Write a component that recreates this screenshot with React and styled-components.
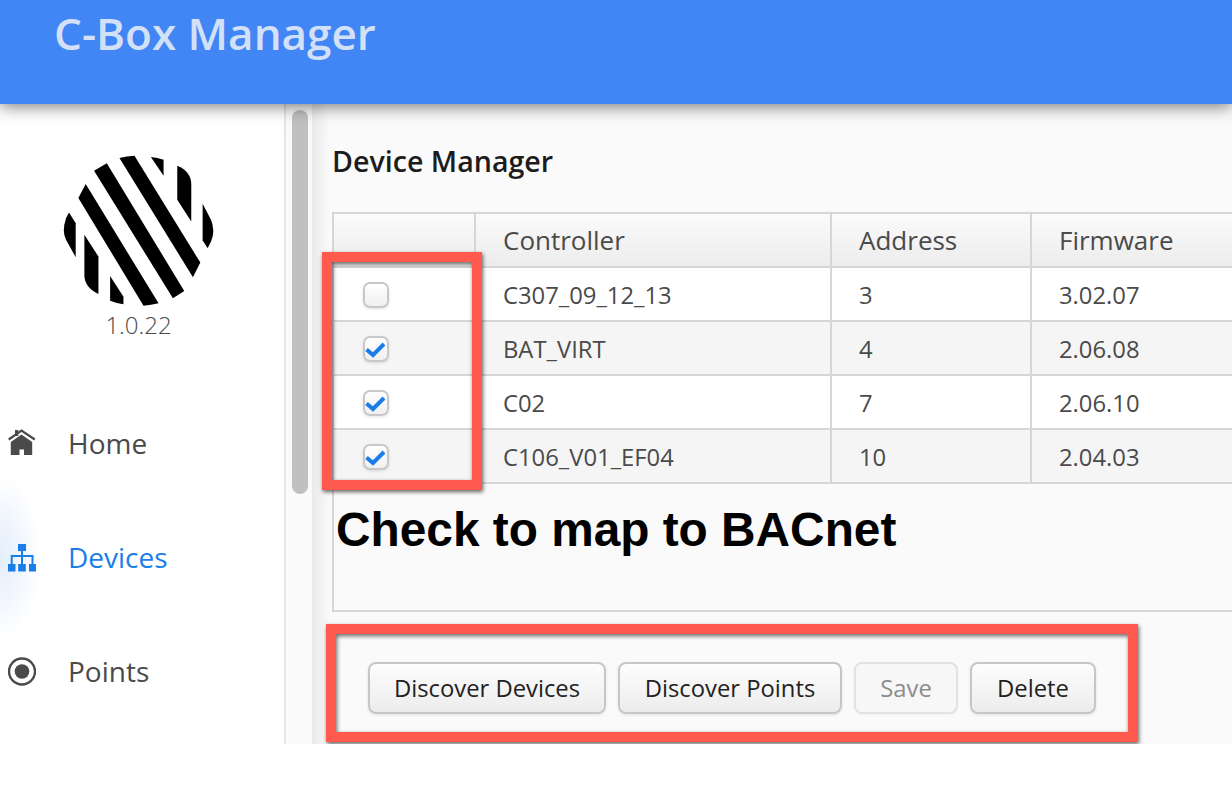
import React from "react";
import styled, { createGlobalStyle } from "styled-components";

const Global = createGlobalStyle`
  html, body { margin: 0; padding: 0; background: #fff; overflow: hidden; }
  body { font-family: "Open Sans", "Noto Sans", sans-serif; }
  * { box-sizing: border-box; }
`;

const Shell = styled.div`
  width: 1232px;
  height: 744px;
  display: flex;
  flex-direction: column;
  overflow: hidden;
  position: relative;
`;

const Header = styled.header`
  height: 104px;
  flex: none;
  background: #4285f4;
  padding: 5px 0 0 54px;
  position: relative;
  z-index: 3;
  box-shadow: 0 2px 16px rgba(0, 0, 0, 0.55);
`;

const Brand = styled.h1`
  margin: 0;
  font-size: 44px;
  line-height: 57px;
  font-weight: 600;
  color: #d3e1f8;
`;

const Body = styled.div`
  flex: 1;
  min-height: 0;
  display: flex;
`;

const Sidebar = styled.aside`
  width: 284px;
  flex: none;
  background: #fff;
  padding-top: 49px;
  display: flex;
  flex-direction: column;
  overflow: hidden;
`;

const LogoBlock = styled.div`
  width: 277px;
  height: 233px;
  display: flex;
  flex-direction: column;
  align-items: center;
`;

const Version = styled.div`
  font-size: 24px;
  font-weight: 300;
  line-height: 30px;
  color: #4a4a4a;
`;

const NavItem = styled.div`
  height: 114px;
  flex: none;
  display: flex;
  align-items: center;
  gap: 32px;
  padding-left: 8px;
  font-size: 28px;
  color: ${(p) => (p.$active ? "#1a7ee8" : "#4a4a4a")};
  position: relative;
  & > svg { flex: none; position: relative; z-index: 1; }
  & > span { position: relative; z-index: 1; }
  ${(p) =>
    p.$active &&
    `&::before {
      content: "";
      position: absolute;
      left: -42px;
      top: -25px;
      width: 84px;
      height: 165px;
      border-radius: 50%;
      background: radial-gradient(closest-side, #e4eefc 0, #eff5fd 45%, #ffffff 100%);
    }`}
`;

const ScrollTrack = styled.div`
  width: 28px;
  flex: none;
  background: #fafafa;
  border-left: 2px solid #e6e6e6;
  padding: 6px 4px 0 6px;
`;

const ScrollThumb = styled.div`
  width: 16px;
  height: 384px;
  border-radius: 8px;
  background: #c0c0c0;
`;

const Main = styled.main`
  flex: 1;
  min-width: 0;
  background: linear-gradient(to right, #e9e9e9 0, #fafafa 18px);
  padding: 0 0 0 20px;
  position: relative;
  overflow: hidden;
`;

const Title = styled.h2`
  margin: 0;
  height: 108px;
  padding-top: 38px;
  font-size: 28.6px;
  line-height: 38px;
  font-weight: 600;
  color: #1c1c1c;
`;

const Frame = styled.div`
  width: 1100px;
  height: 400px;
  border: 2px solid #d6d6d6;
  border-right: none;
`;

const Grid = styled.table`
  border-collapse: collapse;
  table-layout: fixed;
  width: 1098px;
  font-size: 23.8px;
  color: #4a4a4a;
`;

const HeadCell = styled.th`
  height: 53px;
  padding: 0 0 0 27px;
  text-align: left;
  font-weight: 400;
  font-size: 26px;
  background: linear-gradient(to bottom, #fbfbfb, #ececec);
  border-right: 2px solid #d6d6d6;
  border-bottom: 2px solid #d6d6d6;
  width: ${(p) => p.$w}px;
`;

const Row = styled.tr`
  background: ${(p) => (p.$odd ? "#f5f5f5" : "#ffffff")};
`;

const Cell = styled.td`
  height: 54px;
  padding: 2px 0 0 27px;
  border-right: 2px solid #d6d6d6;
  border-bottom: 2px solid #d6d6d6;
`;

const CheckCell = styled.td`
  height: 54px;
  padding: 2px 0 0 29px;
  border-right: 2px solid #d6d6d6;
  border-bottom: 2px solid #d6d6d6;
`;

const Check = styled.span`
  display: flex;
  width: 26px;
  height: 26px;
  border-radius: 7px;
  border: 2px solid #c8c8c8;
  background: linear-gradient(to bottom, #ffffff, #f0f0f0);
  box-shadow: 0 1px 3px rgba(0, 0, 0, 0.12);
`;

const Note = styled.div`
  margin: 18px 0 0 2px;
  font-family: "Liberation Sans", Arial, sans-serif;
  font-weight: 700;
  font-size: 47.8px;
  line-height: 55px;
  color: #000;
`;

const Toolbar = styled.div`
  display: flex;
  gap: 12px;
  padding: 50px 0 0 36px;
`;

const Button = styled.button`
  width: ${(p) => p.$w}px;
  height: 52px;
  padding: 0;
  border-radius: 8px;
  font-family: inherit;
  font-size: 23.8px;
  color: ${(p) => (p.disabled ? "#8c8c8c" : "#222")};
  border: 2px solid ${(p) => (p.disabled ? "#e2e2e2" : "#c6c6c6")};
  background: ${(p) =>
    p.disabled ? "#f7f7f7" : "linear-gradient(to bottom, #fdfdfd, #ececec)"};
  box-shadow: 0 1px 3px rgba(0, 0, 0, ${(p) => (p.disabled ? 0.03 : 0.1)});
`;

const Callout = styled.div`
  position: absolute;
  left: ${(p) => p.$x}px;
  top: ${(p) => p.$y}px;
  width: ${(p) => p.$w}px;
  height: ${(p) => p.$h}px;
  border: 10px solid #ff5a4d;
  box-shadow: 1px 2px 4px rgba(0, 0, 0, 0.6), inset 1px 2px 4px rgba(0, 0, 0, 0.6);
  z-index: 2;
`;

const Logo = () => (
  <svg width="157" height="157" viewBox="180 190 470 470" fill="#000" aria-hidden="true">
    <path d="M235 325L257 283L475 640Q452 646 430 647Z" />
    <path d="M282 243L320 221L552 603L518 625Z" />
    <path d="M358 205Q380 199 403 198L600 518L578 562Z" />
    <path d="M452 202Q472 204 490 210L490 258Z" />
    <path d="M531 228Q573 245 573 285L573 395L531 330Z" />
    <path d="M607 342L632 390Q646 425 632 455L622 475L607 452Z" />
    <path d="M207 368L227 400L227 502L198 450Q185 425 198 385Z" />
    <path d="M253 435L295 500L295 612Q253 592 253 555Z" />
    <path d="M330 558L370 620L370 643Q350 640 330 632Z" />
  </svg>
);

const HomeIcon = () => (
  <svg width="28" height="28" viewBox="0 0 28 28" fill="currentColor" aria-hidden="true">
    <rect x="7" y="1" width="3.2" height="6" />
    <path d="M0.7 10.5L13.5 1.5L26.8 10.5" fill="none" stroke="currentColor" strokeWidth="2.2" />
    <path d="M13.5 5.5L24.2 13V26H16V20.5H11.5V26H2.8V13Z" />
  </svg>
);

const TreeIcon = () => (
  <svg width="28" height="29" viewBox="0 0 28 29" fill="currentColor" aria-hidden="true">
    <rect x="10" y="1" width="8" height="7" />
    <rect x="0" y="21" width="7.5" height="7.5" />
    <rect x="10.2" y="21" width="7.6" height="7.5" />
    <rect x="21" y="21" width="7" height="7.5" />
    <path d="M14 8V21M3.7 21V13H24.5V21" fill="none" stroke="currentColor" strokeWidth="2" />
  </svg>
);

const DotIcon = () => (
  <svg width="28" height="29" viewBox="0 0 28 29" fill="currentColor" aria-hidden="true">
    <circle cx="14" cy="14.5" r="13" fill="none" stroke="currentColor" strokeWidth="2.4" />
    <circle cx="14" cy="14.5" r="7.3" />
  </svg>
);

const Tick = () => (
  <svg width="22" height="22" viewBox="0 0 22 22" aria-hidden="true">
    <path d="M1.5 11.5L8 17L19 6" fill="none" stroke="#1a7ee8" strokeWidth="4" />
  </svg>
);

const rows = [
  ["C307_09_12_13", "3", "3.02.07", false],
  ["BAT_VIRT", "4", "2.06.08", true],
  ["C02", "7", "2.06.10", true],
  ["C106_V01_EF04", "10", "2.04.03", true],
];

export default function App() {
  return (
    <Shell>
      <Global />
      <Header>
        <Brand>C-Box Manager</Brand>
      </Header>
      <Body>
        <Sidebar>
          <LogoBlock>
            <Logo />
            <Version>1.0.22</Version>
          </LogoBlock>
          <NavItem>
            <HomeIcon />
            <span>Home</span>
          </NavItem>
          <NavItem $active>
            <TreeIcon />
            <span>Devices</span>
          </NavItem>
          <NavItem>
            <DotIcon />
            <span>Points</span>
          </NavItem>
        </Sidebar>
        <ScrollTrack>
          <ScrollThumb />
        </ScrollTrack>
        <Main>
          <Title>Device Manager</Title>
          <Frame>
            <Grid>
              <thead>
                <tr>
                  <HeadCell $w={141} />
                  <HeadCell $w={356}>Controller</HeadCell>
                  <HeadCell $w={200}>Address</HeadCell>
                  <HeadCell>Firmware</HeadCell>
                </tr>
              </thead>
              <tbody>
                {rows.map((r, i) => (
                  <Row key={r[0]} $odd={i % 2 === 1}>
                    <CheckCell>
                      <Check>{r[3] && <Tick />}</Check>
                    </CheckCell>
                    <Cell>{r[0]}</Cell>
                    <Cell>{r[1]}</Cell>
                    <Cell>{r[2]}</Cell>
                  </Row>
                ))}
              </tbody>
            </Grid>
            <Note>Check to map to BACnet</Note>
          </Frame>
          <Toolbar>
            <Button $w={238}>Discover Devices</Button>
            <Button $w={224}>Discover Points</Button>
            <Button $w={104} disabled>Save</Button>
            <Button $w={126}>Delete</Button>
          </Toolbar>
          <Callout $x={10} $y={148} $w={160} $h={238} />
          <Callout $x={14} $y={520} $w={812} $h={118} />
        </Main>
      </Body>
    </Shell>
  );
}
